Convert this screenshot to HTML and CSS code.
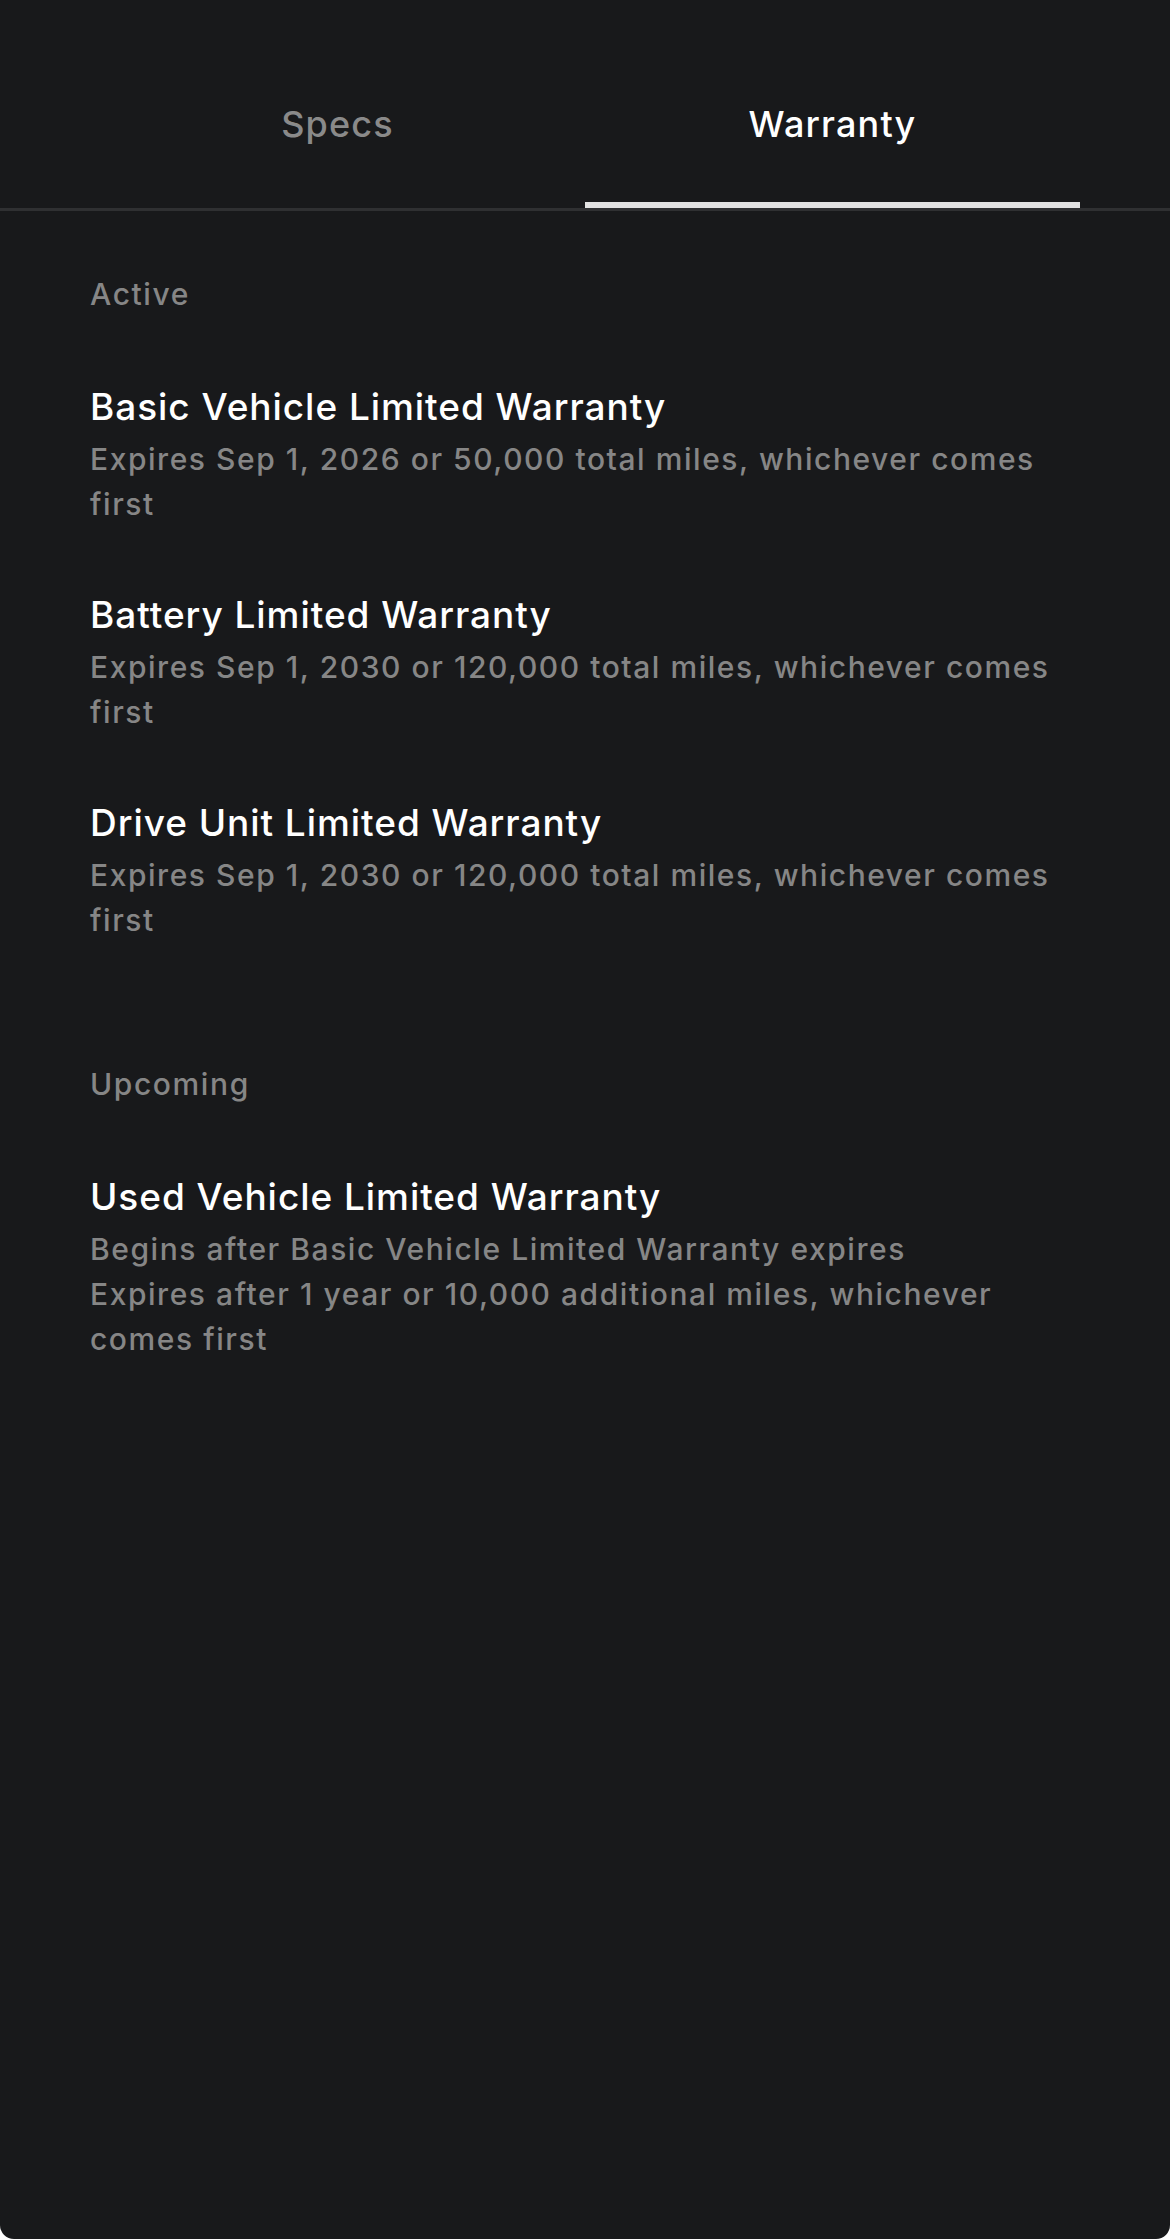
FILE: index.html
```html
<!DOCTYPE html>
<html lang="en">
<head>
<meta charset="utf-8">
<title>Warranty</title>
<link rel="stylesheet" href="styles.css">
</head>
<body>
<div class="screen">
  <nav class="tabs">
    <div class="tab">Specs</div>
    <div class="tab tab-active">Warranty</div>
  </nav>
  <main class="content">
    <section class="group">
      <h2 class="group-label">Active</h2>
      <div class="item">
        <h3 class="item-title">Basic Vehicle Limited Warranty</h3>
        <p class="item-sub">Expires Sep 1, 2026 or 50,000 total miles, whichever comes first</p>
      </div>
      <div class="item">
        <h3 class="item-title">Battery Limited Warranty</h3>
        <p class="item-sub">Expires Sep 1, 2030 or 120,000 total miles, whichever comes first</p>
      </div>
      <div class="item">
        <h3 class="item-title">Drive Unit Limited Warranty</h3>
        <p class="item-sub">Expires Sep 1, 2030 or 120,000 total miles, whichever comes first</p>
      </div>
    </section>
    <section class="group">
      <h2 class="group-label">Upcoming</h2>
      <div class="item">
        <h3 class="item-title">Used Vehicle Limited Warranty</h3>
        <p class="item-sub">Begins after Basic Vehicle Limited Warranty expires</p>
        <p class="item-sub">Expires after 1 year or 10,000 additional miles, whichever comes first</p>
      </div>
    </section>
  </main>
</div>
</body>
</html>
```
FILE: styles.css
```css
html, body {
  margin: 0;
  padding: 0;
  background: #ffffff;
}
body {
  font-family: Inter, "Noto Sans", sans-serif;
  -webkit-font-smoothing: antialiased;
}
.screen {
  width: 1170px;
  height: 2239px;
  background: #18191b;
  border-radius: 0 0 14px 14px;
  overflow: hidden;
}
.tabs {
  display: grid;
  grid-template-columns: 1fr 1fr;
  padding: 0 90px;
  border-bottom: 3px solid #2f3032;
}
.tab {
  padding-top: 100px;
  padding-bottom: 54px;
  line-height: 48px;
  text-align: center;
  font-size: 36px;
  letter-spacing: 1.15px;
  font-weight: 500;
  color: #8a8a8a;
  border-bottom: 6px solid transparent;
}
.tab-active {
  color: #ffffff;
  border-bottom-color: #e2e2e2;
}
.content {
  padding: 63px 90px 0;
}
.group + .group {
  margin-top: 121px;
}
.group-label {
  margin: 0;
  font-size: 30px;
  letter-spacing: 1.6px;
  line-height: 40px;
  font-weight: 500;
  color: #868686;
}
.item {
  margin-top: 69px;
}
.item + .item {
  margin-top: 64px;
}
.item-title {
  margin: 0 0 6px;
  font-size: 37px;
  letter-spacing: 0.95px;
  line-height: 48px;
  font-weight: 500;
  color: #ffffff;
}
.item-sub {
  margin: 0;
  font-size: 30px;
  letter-spacing: 1.55px;
  line-height: 45px;
  font-weight: 500;
  color: #868686;
}
```
